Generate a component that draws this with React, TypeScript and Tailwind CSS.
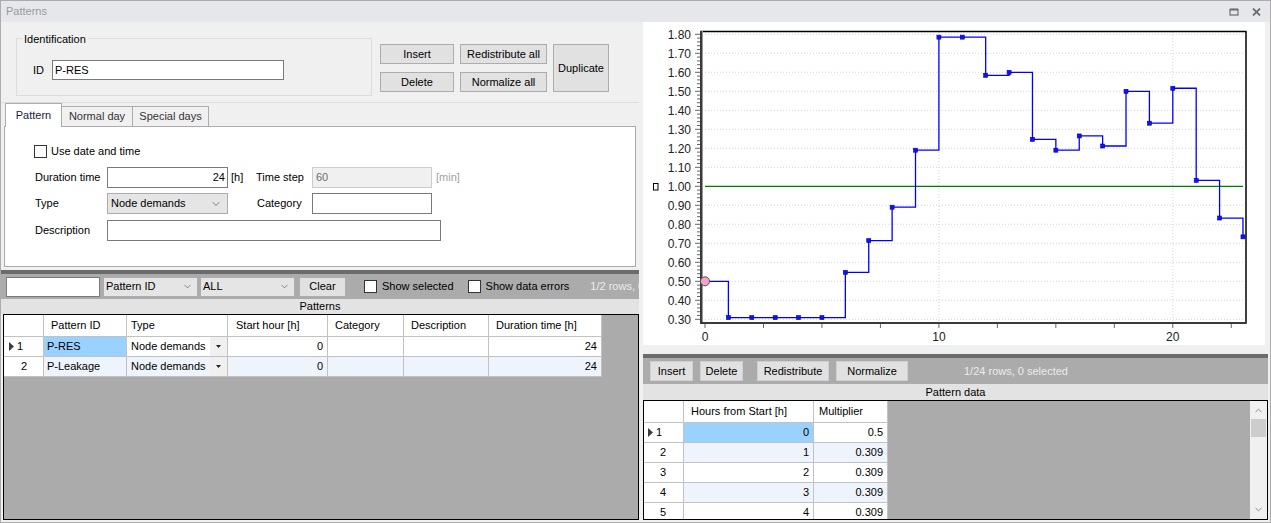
import { ChevronDown, ChevronUp } from "lucide-react";

const multipliers = [
  0.5, 0.309, 0.309, 0.309, 0.309, 0.309, 0.547, 0.714, 0.89, 1.19, 1.785, 1.785,
  1.584, 1.6, 1.247, 1.19, 1.265, 1.212, 1.5, 1.332, 1.516, 1.031, 0.833, 0.734,
];

const X = (h: number) => 62 + h * 23.39;
const Y = (v: number) => 164.3 + (1 - v) * 190;

function Btn({ children, className }: { children: React.ReactNode; className: string }) {
  return (
    <div className={`flex items-center justify-center bg-[#e1e1e1] border border-[#adadad] text-[11px] text-black ${className}`}>
      {children}
    </div>
  );
}

function Check() {
  return <div className="w-[13px] h-[13px] bg-white border border-[#333333] shrink-0" />;
}

function RowArrow() {
  return (
    <svg width="5" height="9" viewBox="0 0 5 9" className="shrink-0">
      <polygon points="0,0 5,4.5 0,9" fill="#3c3c3c" />
    </svg>
  );
}

function Chart() {
  let d = `M ${X(0)} ${Y(multipliers[0])}`;
  for (let i = 1; i < multipliers.length; i++) {
    d += ` H ${X(i)} V ${Y(multipliers[i])}`;
  }
  const yLabels = Array.from({ length: 16 }, (_, i) => 0.3 + i * 0.1);
  const minor = Array.from({ length: 76 }, (_, k) => k);
  const xTicks = Array.from({ length: 10 }, (_, i) => i * 2.5);

  return (
    <svg width="622" height="323" className="block" fontFamily="Liberation Sans, Arial, sans-serif">
      {/* grid */}
      {yLabels.map((v) => (
        <line key={`g${v}`} x1="59" x2="602" y1={Y(v)} y2={Y(v)} stroke="#d4d4d4" strokeDasharray="1 2" />
      ))}
      {[10, 20].map((h) => (
        <line key={`gv${h}`} x1={X(h)} x2={X(h)} y1="10" y2="300" stroke="#d4d4d4" strokeDasharray="1 2" />
      ))}
      {/* frame */}
      <rect x="58" y="9.5" width="545" height="291.5" fill="none" stroke="#000" strokeWidth="1.5" />
      <line x1="58" x2="58" y1="9" y2="302" stroke="#3a3a3a" strokeWidth="2" />
      <line x1="57" x2="603" y1="301" y2="301" stroke="#3a3a3a" strokeWidth="2" />
      <line x1="59.5" x2="59.5" y1="9" y2="300" stroke="#9a9a9a" strokeWidth="1" />
      {/* y ticks */}
      {minor.map((k) => {
        const v = 0.3 + k * 0.02;
        return (
          <line key={`t${k}`} x1={k % 5 === 0 ? 52 : 54} x2="57" y1={Y(v)} y2={Y(v)} stroke="#666" strokeWidth="1" />
        );
      })}
      {xTicks.map((h) => (
        <line key={`xt${h}`} x1={X(h)} x2={X(h)} y1="302" y2="306" stroke="#666" strokeWidth="1" />
      ))}
      {yLabels.map((v) => (
        <text key={`l${v}`} x="48" y={Y(v) + 4.3} textAnchor="end" fontSize="12" fill="#222">
          {v.toFixed(2)}
        </text>
      ))}
      {[0, 10, 20].map((h) => (
        <text key={`xl${h}`} x={X(h)} y="319" textAnchor="middle" fontSize="12" fill="#222">
          {h}
        </text>
      ))}
      <rect x="10.5" y="161.5" width="4.5" height="6.5" fill="none" stroke="#000" strokeWidth="1" />
      {/* reference line */}
      <line x1={X(0)} x2={X(23)} y1={Y(1)} y2={Y(1)} stroke="#008000" strokeWidth="1.2" />
      {/* pattern */}
      <path d={d} fill="none" stroke="#0000ff" strokeWidth="1.3" />
      {multipliers.slice(1).map((v, i) => (
        <rect key={`m${i}`} x={X(i + 1) - 2} y={Y(v) - 2} width="4" height="4" fill="#1010ff" stroke="#0000b0" strokeWidth="0.6" />
      ))}
      <circle cx={X(0)} cy={Y(multipliers[0])} r="4.5" fill="#f4a3c8" stroke="#555" strokeWidth="1" />
    </svg>
  );
}

const leftCols = [
  { w: "w-[83px]", title: "Pattern ID", pl: "pl-[7px]" },
  { w: "w-[101px]", title: "Type", pl: "pl-[4px]" },
  { w: "w-[100px]", title: "Start hour [h]", pl: "pl-[8px]" },
  { w: "w-[76px]", title: "Category", pl: "pl-[7px]" },
  { w: "w-[85px]", title: "Description", pl: "pl-[7px]" },
  { w: "w-[113px]", title: "Duration time [h]", pl: "pl-[7px]" },
];

const patterns = [
  { id: "P-RES", start: "0", dur: "24" },
  { id: "P-Leakage", start: "0", dur: "24" },
];

function PatternsGrid() {
  const cell = "h-full border-r border-b border-[#c2c2c2] flex items-center shrink-0";
  return (
    <div className="flex-1 ml-[2px] w-[636px] border border-black bg-[#ababab] overflow-hidden">
      <div className="flex h-[22px]">
        <div className={`${cell} w-[40px] bg-white`} />
        {leftCols.map((c) => (
          <div key={c.title} className={`${cell} ${c.w} ${c.pl} bg-white`}>
            {c.title}
          </div>
        ))}
      </div>
      {patterns.map((p, i) => {
        const bg = i % 2 === 0 ? "bg-white" : "bg-[#eef4fb]";
        return (
          <div key={p.id} className="flex h-[20px]">
            <div className={`${cell} w-[40px] bg-white ${i === 0 ? "pl-[5px] gap-[3px]" : "pl-[17px]"}`}>
              {i === 0 && <RowArrow />}
              {i + 1}
            </div>
            <div className={`${cell} w-[83px] pl-[3px] ${i === 0 ? "bg-[#99d1ff]" : bg}`}>{p.id}</div>
            <div className={`${cell} w-[101px] ${bg} pl-[4px] justify-between`}>
              <span>Node demands</span>
              <div className="w-[17px] h-full flex items-center justify-center bg-[#f0f0f0]">
                <svg width="5" height="3" viewBox="0 0 5 3">
                  <polygon points="0,0 5,0 2.5,3" fill="#222" />
                </svg>
              </div>
            </div>
            <div className={`${cell} w-[100px] ${bg} justify-end pr-[4px]`}>{p.start}</div>
            <div className={`${cell} w-[76px] ${bg}`} />
            <div className={`${cell} w-[85px] ${bg}`} />
            <div className={`${cell} w-[113px] ${bg} justify-end pr-[4px]`}>{p.dur}</div>
          </div>
        );
      })}
    </div>
  );
}

function DataGrid() {
  const cell = "h-full border-r border-b border-[#c2c2c2] flex items-center shrink-0";
  const rows = [0, 1, 2, 3, 4];
  return (
    <div className="flex-1 w-[625px] border border-black bg-[#ababab] overflow-hidden flex">
      <div className="flex-1">
        <div className="flex h-[22px]">
          <div className={`${cell} w-[40px] bg-white`} />
          <div className={`${cell} w-[130px] bg-white pl-[7px]`}>Hours from Start [h]</div>
          <div className={`${cell} w-[74px] bg-white pl-[5px]`}>Multiplier</div>
        </div>
        {rows.map((i) => {
          const bg = i % 2 === 0 ? "bg-white" : "bg-[#eef4fb]";
          return (
            <div key={i} className="flex h-[20px]">
              <div className={`${cell} w-[40px] bg-white ${i === 0 ? "pl-[4px] gap-[3px]" : "pl-[16px]"}`}>
                {i === 0 && <RowArrow />}
                {i + 1}
              </div>
              <div className={`${cell} w-[130px] justify-end pr-[4px] ${i === 0 ? "bg-[#99d1ff]" : bg}`}>{i}</div>
              <div className={`${cell} w-[74px] justify-end pr-[4px] ${bg}`}>{i === 0 ? "0.5" : "0.309"}</div>
            </div>
          );
        })}
      </div>
      <div className="w-[17px] bg-[#f0f0f0] flex flex-col items-center">
        <ChevronUp size={11} strokeWidth={1.5} className="text-[#606060] mt-[4px]" />
        <div className="w-[15px] h-[18px] bg-[#cdcdcd] mt-[3px]" />
        <div className="flex-1" />
        <ChevronDown size={11} strokeWidth={1.5} className="text-[#606060] mb-[4px]" />
      </div>
    </div>
  );
}

export default function App() {
  return (
    <div className="w-[1271px] h-[523px] border border-[#acacac] bg-[#f0f0f0] flex flex-col overflow-hidden text-[11px] text-black font-['Liberation_Sans',Arial,sans-serif]">
      {/* title bar */}
      <div className="h-[21px] shrink-0 bg-[#e6e7eb] flex items-center pl-[5px] pr-[9px] text-[#9a9a9a]">
        <span className="flex-1">Patterns</span>
        <svg width="10" height="8" viewBox="0 0 10 8" className="mr-[13px]">
          <rect x="1" y="1.5" width="8" height="5.5" fill="none" stroke="#6e6e6e" strokeWidth="1.2" />
          <line x1="1" x2="9" y1="1.5" y2="1.5" stroke="#6e6e6e" strokeWidth="2" />
        </svg>
        <svg width="9" height="8" viewBox="0 0 9 8">
          <path d="M1 0.5 L8 7.5 M8 0.5 L1 7.5" stroke="#6e6e6e" strokeWidth="1.8" />
        </svg>
      </div>

      <div className="flex-1 flex min-h-0">
        {/* left column */}
        <div className="w-[638px] shrink-0 flex flex-col pb-[2px]">
          <div className="h-[81px] shrink-0 border-b border-[#dcdcdc] flex items-start">
            <div className="relative mt-[16px] ml-[15px] w-[356px] h-[58px] border border-[#dcdcdc]">
              <span className="absolute -top-[8px] left-[5px] px-[2px] bg-[#f0f0f0]">Identification</span>
              <div className="flex items-center pt-[21px] pl-[16px]">
                <span className="w-[19px]">ID</span>
                <div className="w-[232px] h-[20px] bg-white border border-[#7a7a7a] flex items-center pl-[2px]">P-RES</div>
              </div>
            </div>
            <div className="flex flex-col gap-[8px] mt-[22px] ml-[8px]">
              <Btn className="w-[74px] h-[20px]">Insert</Btn>
              <Btn className="w-[74px] h-[20px]">Delete</Btn>
            </div>
            <div className="flex flex-col gap-[8px] mt-[22px] ml-[6px]">
              <Btn className="w-[87px] h-[20px]">Redistribute all</Btn>
              <Btn className="w-[87px] h-[20px]">Normalize all</Btn>
            </div>
            <Btn className="w-[56px] h-[48px] mt-[22px] ml-[6px]">Duplicate</Btn>
          </div>

          {/* tabs */}
          <div className="h-[23px] shrink-0 flex items-end pl-[4px]">
            <div className="relative z-10 w-[57px] h-[24px] -mb-[1px] bg-white border border-b-0 border-[#acacac] flex items-center justify-center text-[#1a1a40]">
              Pattern
            </div>
            <div className="-ml-[1px] w-[72px] h-[20px] bg-[#f0f0f0] border border-b-0 border-[#acacac] flex items-center justify-center text-[#333]">
              Normal day
            </div>
            <div className="-ml-[1px] w-[77px] h-[20px] bg-[#f0f0f0] border border-b-0 border-[#acacac] flex items-center justify-center text-[#333]">
              Special days
            </div>
          </div>
          <div className="h-[141px] shrink-0 ml-[3px] w-[632px] bg-white border border-[#acacac] flex flex-col">
            <div className="flex items-center h-[13px] mt-[18px] pl-[29px]">
              <Check />
              <span className="ml-[4px]">Use date and time</span>
            </div>
            <div className="flex items-center h-[21px] mt-[9px] pl-[30px]">
              <span className="w-[72px]">Duration time</span>
              <div className="w-[121px] h-[21px] bg-white border border-[#7a7a7a] flex items-center justify-end pr-[2px]">24</div>
              <span className="w-[28px] pl-[3px]">[h]</span>
              <span className="w-[56px]">Time step</span>
              <div className="w-[120px] h-[21px] bg-[#f0f0f0] border border-[#cccccc] flex items-center pl-[3px] text-[#6d6d6d]">60</div>
              <span className="ml-[4px] text-[#a0a0a0]">[min]</span>
            </div>
            <div className="flex items-center h-[21px] mt-[5px] pl-[30px]">
              <span className="w-[72px]">Type</span>
              <div className="w-[121px] h-[21px] bg-[#e5e5e5] border border-[#adadad] flex items-center justify-between pl-[3px] pr-[5px]">
                <span>Node demands</span>
                <ChevronDown size={12} strokeWidth={1.3} className="text-[#444]" />
              </div>
              <span className="w-[29px]" />
              <span className="w-[55px]">Category</span>
              <div className="w-[120px] h-[21px] bg-white border border-[#7a7a7a]" />
            </div>
            <div className="flex items-center h-[21px] mt-[6px] pl-[30px]">
              <span className="w-[72px]">Description</span>
              <div className="w-[334px] h-[21px] bg-white border border-[#7a7a7a]" />
            </div>
          </div>

          <div className="h-[4px] shrink-0 mt-[3px] bg-[#6b6b6b]" />
          <div className="h-[25px] shrink-0 bg-[#ababab] flex items-center overflow-hidden whitespace-nowrap">
            <div className="ml-[5px] w-[94px] h-[20px] bg-white border border-[#7a7a7a] shrink-0" />
            <div className="ml-[3px] w-[95px] h-[20px] bg-[#e5e5e5] border border-[#adadad] flex items-center justify-between pl-[2px] pr-[4px] shrink-0">
              <span>Pattern ID</span>
              <ChevronDown size={11} strokeWidth={1.3} className="text-[#444]" />
            </div>
            <div className="ml-[2px] w-[95px] h-[20px] bg-[#e5e5e5] border border-[#adadad] flex items-center justify-between pl-[2px] pr-[4px] shrink-0">
              <span>ALL</span>
              <ChevronDown size={11} strokeWidth={1.3} className="text-[#444]" />
            </div>
            <Btn className="ml-[4px] w-[47px] h-[20px] shrink-0">Clear</Btn>
            <div className="ml-[18px] flex items-center shrink-0">
              <Check />
              <span className="ml-[5px]">Show selected</span>
            </div>
            <div className="ml-[14px] flex items-center shrink-0">
              <Check />
              <span className="ml-[5px]">Show data errors</span>
            </div>
            <span className="ml-[21px] flex-1 min-w-0 overflow-hidden text-[#ececec]">1/2 rows, 0 selected</span>
          </div>
          <div className="h-[15px] shrink-0 bg-[#e3e3e3] flex items-center justify-center">Patterns</div>
          <PatternsGrid />
        </div>

        <div className="w-[4px] shrink-0" />

        {/* right column */}
        <div className="w-[625px] shrink-0 flex flex-col pb-[2px]">
          <div className="h-[323px] shrink-0 w-[622px] bg-white">
            <Chart />
          </div>
          <div className="h-[9px] shrink-0" />
          <div className="h-[4px] shrink-0 bg-[#6b6b6b]" />
          <div className="h-[26px] shrink-0 bg-[#ababab] flex items-center whitespace-nowrap">
            <div className="ml-[7px] w-[43px] h-[20px] bg-[#e1e1e1] border border-[#d0d0d0] flex items-center justify-center">Insert</div>
            <div className="ml-[7px] w-[43px] h-[20px] bg-[#e1e1e1] border border-[#d0d0d0] flex items-center justify-center">Delete</div>
            <div className="ml-[14px] w-[72px] h-[20px] bg-[#e1e1e1] border border-[#d0d0d0] flex items-center justify-center">Redistribute</div>
            <div className="ml-[7px] w-[72px] h-[20px] bg-[#e1e1e1] border border-[#d0d0d0] flex items-center justify-center">Normalize</div>
            <span className="ml-[56px] text-[#ececec]">1/24 rows, 0 selected</span>
          </div>
          <div className="h-[16px] shrink-0 bg-[#e3e3e3] flex items-center justify-center">Pattern data</div>
          <DataGrid />
        </div>
      </div>
    </div>
  );
}
